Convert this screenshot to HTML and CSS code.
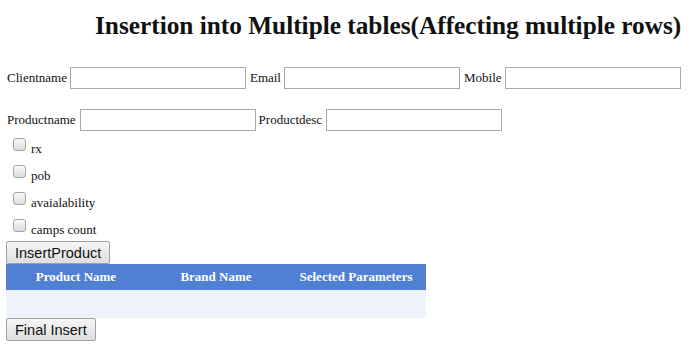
FILE: index.html
```html
<!DOCTYPE html>
<html lang="en">
<head>
    <meta charset="UTF-8">
    <title>Insertion into Multiple tables</title>
    <link rel="stylesheet" href="styles.css">
</head>
<body>

<h1 class="title">Insertion into Multiple tables(Affecting multiple rows)</h1>

<div class="field-row">
    <label>Clientname</label> <input type="text" class="txt">
    <label>Email</label> <input type="text" class="txt">
    <label>Mobile</label> <input type="text" class="txt">
</div>

<div class="field-row">
    <label>Productname</label> <input type="text" class="txt">
    <label>Productdesc</label> <input type="text" class="txt">
</div>

<div class="params">
    <div class="param"><input type="checkbox"> <span>rx</span></div>
    <div class="param"><input type="checkbox"> <span>pob</span></div>
    <div class="param"><input type="checkbox"> <span>avaialability</span></div>
    <div class="param"><input type="checkbox"> <span>camps count</span></div>
</div>

<button class="btn">InsertProduct</button>

<table class="products">
    <thead>
        <tr>
            <th>Product Name</th>
            <th>Brand Name</th>
            <th>Selected Parameters</th>
        </tr>
    </thead>
    <tbody>
        <tr><td></td><td></td><td></td></tr>
    </tbody>
</table>

<button class="btn">Final Insert</button>

</body>
</html>
```

FILE: styles.css
```css
* { box-sizing: border-box; }
body {
    font-family: "Liberation Serif", "Times New Roman", serif;
    font-size: 13px;
    margin: 0 6px;
    color: #111;
}
.title {
    font-size: 25.3px;
    font-weight: bold;
    margin: 0;
    padding: 10px 0 0 89px;
    line-height: 30px;
    white-space: nowrap;
}
.field-row {
    display: flex;
    align-items: center;
    gap: 3px;
    margin-top: 27px;
    padding-left: 1px;
}
.field-row label + .txt {
    margin-right: 1px;
}
.field-row + .field-row {
    margin-top: 20px;
}
.field-row + .field-row .txt {
    margin-left: 1px;
    margin-right: 0;
}
.txt {
    width: 176px;
    height: 22px;
    border: 1px solid #a9a9a9;
    margin: 0;
    padding: 1px 2px;
}
.params {
    margin-top: 2px;
}
.param {
    display: flex;
    align-items: center;
    height: 27px;
    padding-left: 7px;
}
.param input {
    appearance: none;
    margin: 0 5px 5px 0;
    width: 13px;
    height: 13px;
    border: 1px solid #a6a6a6;
    border-radius: 3px;
    background: linear-gradient(#fafafa, #dcdcdc);
}
.param span {
    padding-top: 4px;
}
.btn {
    display: block;
    font-family: Arial, "Liberation Sans", sans-serif;
    font-size: 14.5px;
    height: 23px;
    padding: 0 8px;
    margin: 0;
    border: 1px solid #a0a0a0;
    border-radius: 2px;
    background: linear-gradient(#f6f6f6, #dedede);
    color: #111;
}
.products {
    width: 420px;
    border-collapse: collapse;
    table-layout: fixed;
}
.products th {
    background: #5080d3;
    color: #fff;
    font-weight: bold;
    height: 26px;
    text-align: center;
}
.products td {
    background: #eef3fb;
    height: 28px;
}
```
